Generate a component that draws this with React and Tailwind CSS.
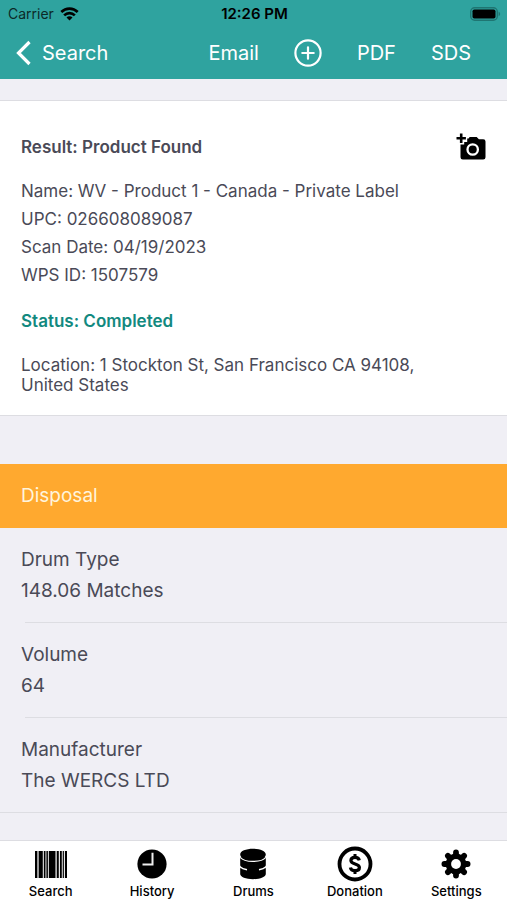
const details = [
  { label: 'Name', value: 'WV - Product 1 - Canada - Private Label' },
  { label: 'UPC', value: '026608089087' },
  { label: 'Scan Date', value: '04/19/2023' },
  { label: 'WPS ID', value: '1507579' },
]

const disposal = [
  { label: 'Drum Type', value: '148.06 Matches' },
  { label: 'Volume', value: '64' },
  { label: 'Manufacturer', value: 'The WERCS LTD' },
]

const tabs = [
  { name: 'Search', icon: BarcodeIcon },
  { name: 'History', icon: ClockIcon },
  { name: 'Drums', icon: DrumsIcon },
  { name: 'Donation', icon: DollarIcon },
  { name: 'Settings', icon: GearIcon },
]

function WifiIcon() {
  return (
    <svg viewBox="0 0 20 15" className="h-[14px] w-[19px]" fill="none" stroke="black" strokeWidth="2.8" aria-hidden="true">
      <path d="M1.2 5.4a12.4 12.4 0 0 1 17.6 0" />
      <path d="M4.3 8.9a8 8 0 0 1 11.4 0" />
      <path d="M10 14.4 6.8 11.2a4.5 4.5 0 0 1 6.4 0Z" fill="black" stroke="none" />
    </svg>
  )
}

function BatteryIcon() {
  return (
    <svg viewBox="0 0 31 14" className="h-[14px] w-[31px]" aria-hidden="true">
      <rect x="0.7" y="0.7" width="26.6" height="12.6" rx="4" fill="none" stroke="#1f7572" strokeWidth="1.4" />
      <rect x="2.5" y="2.5" width="23" height="9" rx="1.8" fill="black" />
      <path d="M28.6 4.8c2 .7 2 3.7 0 4.4Z" fill="#1f7572" />
    </svg>
  )
}

function BackIcon() {
  return (
    <svg viewBox="0 0 16 26" className="h-[26px] w-4" fill="none" stroke="white" strokeWidth="3.2" aria-hidden="true">
      <path d="M13.500 2 2.500 13l11 11" />
    </svg>
  )
}

function PlusCircleIcon() {
  return (
    <svg viewBox="0 0 28 28" className="h-7 w-7" fill="none" stroke="white" strokeWidth="2.2" strokeLinecap="round" aria-hidden="true">
      <circle cx="14" cy="14" r="12.6" />
      <path d="M14 8.3v11.4M8.3 14h11.4" />
    </svg>
  )
}

function AddPhotoIcon() {
  return (
    <svg viewBox="0 0 30 28" className="h-7 w-[30px]" aria-hidden="true">
      <path
        d="M4.500 11.500h3.700V9h3V5.400h1.300L13.700 4h7l2.200 2.200h4.300a2.300 2.300 0 0 1 2.300 2.300v15.800a2.300 2.300 0 0 1-2.300 2.300H6.800a2.300 2.300 0 0 1-2.300-2.300Z"
        fill="black"
      />
      <path d="M5.200.5v9.400M.5 5.200h9.400" stroke="black" strokeWidth="2.600" />
      <circle cx="16.700" cy="16.500" r="5.200" fill="none" stroke="white" strokeWidth="2.300" />
    </svg>
  )
}

function BarcodeIcon() {
  return (
    <svg viewBox="0 0 32 27" className="h-[27px] w-8" aria-hidden="true">
      <path d="M0 0h32v27H0z" fill="white" />
      <path
        d="M0 0h2.400v27H0zM3.600 0h4.200v27H3.600zM8.800 0h1.700v27H8.800zM11.400 0h1.500v27h-1.500zM13.800 0h6.700v27h-6.700zM21.700 0h2.100v27h-2.100zM24.900 0h1.900v27h-1.900zM27.700 0h1.200v27h-1.200zM29.900 0H32v27h-2.100z"
        fill="black"
      />
    </svg>
  )
}

function ClockIcon() {
  return (
    <svg viewBox="0 0 30 30" className="h-[30px] w-[30px]" aria-hidden="true">
      <circle cx="15" cy="15" r="14.600" fill="black" />
      <path d="M15.500 3.800v11.700H5.500" fill="none" stroke="#eee" strokeWidth="2" />
    </svg>
  )
}

function DrumsIcon() {
  return (
    <svg viewBox="0 0 28 32" className="h-8 w-7" aria-hidden="true">
      <path
        d="M1.200 6.500C1.200 3 7 .8 14 .8s12.800 2.200 12.800 5.700c0 1-.4 1.800-1 2.500.6.500 1 1.200 1 2v6c0 .8-.3 1.400-.8 2 .5.500.8 1.200.8 2v5c0 3-5.800 5.200-12.800 5.200S1.200 29 1.200 26v-5c0-.8.300-1.500.8-2-.5-.6-.8-1.200-.8-2v-6c0-.8.400-1.500 1-2-.6-.7-1-1.500-1-2.500Z"
        fill="black"
      />
      <path d="M1.500 9.500c1.800 2.500 6.500 3.900 12.500 3.900s10.700-1.400 12.500-3.900" fill="none" stroke="white" strokeWidth="1.200" />
      <path d="M1 18.800c1.800 1.600 4 2.400 7 3M27 18.800c-1.800 1.600-4 2.400-7 3" fill="none" stroke="white" strokeWidth="1.500" />
    </svg>
  )
}

function DollarIcon() {
  return (
    <svg viewBox="0 0 36 36" className="h-9 w-9" fill="none" stroke="black" aria-hidden="true">
      <circle cx="18" cy="18" r="15.500" strokeWidth="3.800" />
      <path
        d="M22.300 14.300c-.5-2-2.100-2.900-4.300-2.900-2.500 0-4.100 1.200-4.100 3.100 0 4.500 8.500 2.400 8.500 6.900 0 2.100-1.800 3.300-4.400 3.300-2.500 0-4.200-1.100-4.600-3.200"
        strokeWidth="3.200"
      />
      <path d="M18 8v3.500M18 24.500V28" strokeWidth="3" />
    </svg>
  )
}

function GearIcon() {
  return (
    <svg viewBox="0 0 30 30" className="h-[30px] w-[30px]" aria-hidden="true">
      <g stroke="black" strokeWidth="5.800" strokeLinecap="round">
        <path d="M15 3.400v23.200M3.400 15h23.200M6.900 6.900l16.200 16.200M23.100 6.900 6.900 23.100" />
      </g>
      <circle cx="15" cy="15" r="10.400" fill="black" />
      <circle cx="15" cy="15" r="4.900" fill="white" />
    </svg>
  )
}

export default function App() {
  return (
    <div className="flex min-h-screen flex-col bg-[#f0eff5] font-['Inter',sans-serif] text-[#4a4a57]">
      <header className="bg-[#2fa39f]">
        {/* Status bar */}
        <div className="grid h-7 grid-cols-3 items-center pr-1.5 pl-2 text-black">
          <div className="flex items-center gap-1.5">
            <span className="text-sm text-[#0c2928]">Carrier</span>
            <WifiIcon />
          </div>
          <span className="text-center text-[15px] font-semibold">12:26 PM</span>
          <div className="flex justify-end">
            <BatteryIcon />
          </div>
        </div>

        <nav className="flex h-[51px] items-center justify-between pr-9 pb-0.5 pl-4 text-xl text-white">
          <button className="flex items-center gap-2.5">
            <BackIcon />
            Search
          </button>
          <div className="flex items-center gap-[35px]">
            <button>Email</button>
            <button aria-label="Add">
              <PlusCircleIcon />
            </button>
            <button>PDF</button>
            <button>SDS</button>
          </div>
        </nav>
      </header>

      <main className="flex-1">
        <section className="mt-[21px] border-y border-[#dddde2] bg-white px-[21px] pt-8 pb-5 text-[17px] leading-5">
          <div className="flex items-center justify-between">
            <h1 className="font-semibold">Result: Product Found</h1>
            <button aria-label="Add photo">
              <AddPhotoIcon />
            </button>
          </div>
          <div className="mt-4 leading-7">
            {details.map((item) => (
              <p key={item.label}>
                {item.label}: {item.value}
              </p>
            ))}
          </div>
          <p className="mt-[22px] font-semibold text-[#12897f]">Status: Completed</p>
          <p className="mt-6 max-w-[410px]">Location: 1 Stockton St, San Francisco CA 94108, United States</p>
        </section>

        <section className="mt-12 border-b border-[#dddde2] text-[19px]">
          <h2 className="bg-[#ffa92f] px-[21px] py-[18px] leading-7 text-[#fff4dc]">Disposal</h2>
          {disposal.map((item, i) => (
            <div key={item.label} className="pl-[21px]">
              {i > 0 && <div className="ml-1 h-px bg-[#dddde2]" />}
              <div className="py-4 leading-[31px]">
                <p>{item.label}</p>
                <p>{item.value}</p>
              </div>
            </div>
          ))}
        </section>
      </main>

      <nav className="grid grid-cols-5 border-t border-[#dddde2] bg-white pb-px text-[13px] leading-4 font-medium text-black">
        {tabs.map((tab) => (
          <a key={tab.name} href="#" className="flex flex-col items-center">
            <span className="flex h-[42px] items-center pt-1">
              <tab.icon />
            </span>
            {tab.name}
          </a>
        ))}
      </nav>
    </div>
  )
}
